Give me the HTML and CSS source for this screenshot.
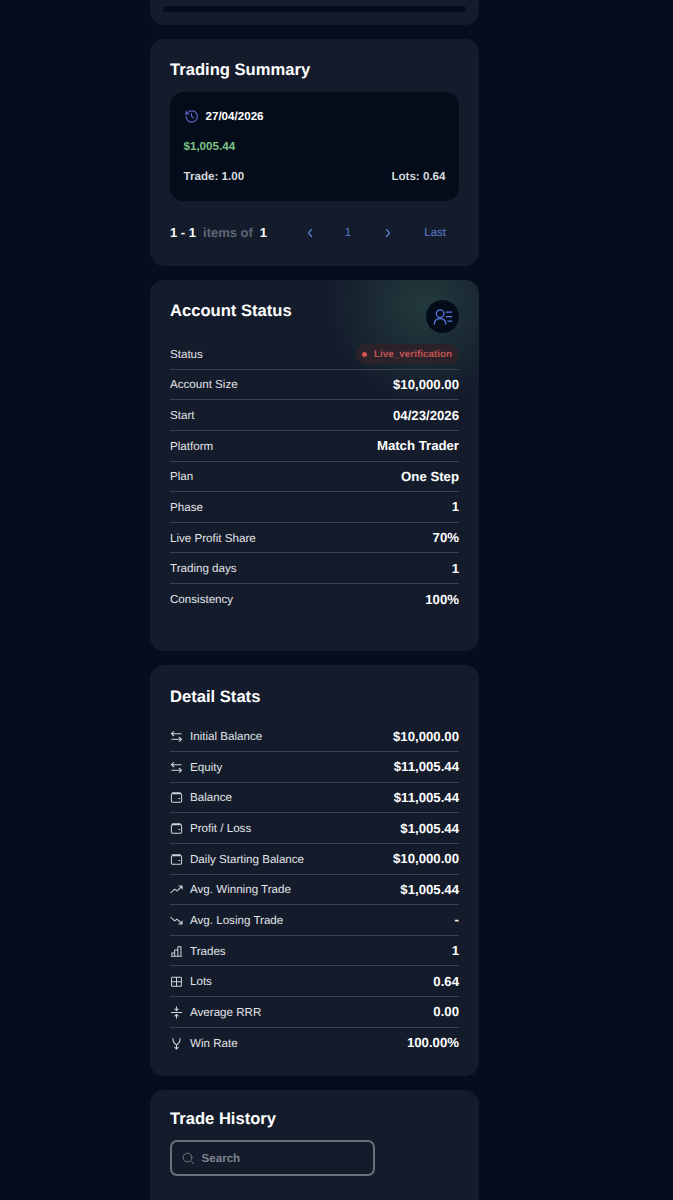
FILE: index.html
```html
<!DOCTYPE html>
<html>

<head>
    <meta charset="utf-8">
    <title>Dashboard</title>
    <meta name="viewport" content="width=device-width, initial-scale=1">
    <link rel="stylesheet" href="styles.css">
</head>

<body>
    <main class="column">
        <section class="card card-top">
            <div class="top-bar"></div>
        </section>

        <section class="card card-summary">
            <h2 class="card-title">Trading Summary</h2>
            <div class="summary-box">
                <div class="summary-date">
                    <svg class="history-icon" viewBox="0 0 24 24" fill="none" stroke="currentColor" stroke-width="1.9" stroke-linecap="round" stroke-linejoin="round">
                        <path d="M3.500 12a9 9 0 1 0 2.800-6.500L3.500 8" />
                        <path d="M3.500 3.500V8H8" />
                        <path d="M12 7.500V12l3.500 2" />
                    </svg>
                    <span>27/04/2026</span>
                </div>
                <div class="summary-profit">$1,005.44</div>
                <div class="summary-foot">
                    <span>Trade: 1.00</span>
                    <span>Lots: 0.64</span>
                </div>
            </div>
            <div class="pager">
                <div class="pager-count"><b>1 - 1</b><span>items of</span><b>1</b></div>
                <div class="pager-links">
                    <svg class="pager-arrow" viewBox="0 0 10 12" fill="none" stroke="currentColor" stroke-width="1.2" stroke-linecap="round" stroke-linejoin="round"><path d="M6.500 2.500 3.500 6l3 3.500" /></svg>
                    <span class="pager-page">1</span>
                    <svg class="pager-arrow" viewBox="0 0 10 12" fill="none" stroke="currentColor" stroke-width="1.2" stroke-linecap="round" stroke-linejoin="round"><path d="M3.500 2.500 6.500 6l-3 3.500" /></svg>
                    <span class="pager-last">Last</span>
                </div>
            </div>
        </section>

        <section class="card card-status">
            <div class="status-glow"></div>
            <div class="status-head">
                <h2 class="card-title">Account Status</h2>
                <div class="status-badge">
                    <svg viewBox="0 0 24 24" fill="none" stroke="currentColor" stroke-width="1.5" stroke-linecap="round" stroke-linejoin="round">
                        <circle cx="8.500" cy="8" r="4.500" />
                        <path d="M1.500 20.500c.4-4.300 3.200-6.500 7-6.500s6.600 2.200 7 6.500" />
                        <path d="M15.500 6h7M16 11.500h6.500M18 17h4.500" />
                    </svg>
                </div>
            </div>
            <div class="row">
                <span class="row-label">Status</span>
                <span class="pill"><i class="pill-dot"></i>Live_verification</span>
            </div>
            <div class="row"><span class="row-label">Account Size</span><span class="row-value">$10,000.00</span></div>
            <div class="row"><span class="row-label">Start</span><span class="row-value">04/23/2026</span></div>
            <div class="row"><span class="row-label">Platform</span><span class="row-value">Match Trader</span></div>
            <div class="row"><span class="row-label">Plan</span><span class="row-value">One Step</span></div>
            <div class="row"><span class="row-label">Phase</span><span class="row-value">1</span></div>
            <div class="row"><span class="row-label">Live Profit Share</span><span class="row-value">70%</span></div>
            <div class="row"><span class="row-label">Trading days</span><span class="row-value">1</span></div>
            <div class="row row-last"><span class="row-label">Consistency</span><span class="row-value">100%</span></div>
        </section>

        <section class="card card-detail">
            <h2 class="card-title">Detail Stats</h2>
            <div class="detail-rows">
                <div class="row">
                    <span class="row-label">
                        <svg class="row-icon" viewBox="0 0 14 14"><path d="M1.500 4h10.500M4 1.800 1.500 4 4 6.200M12.500 10H2M10 7.800l2.500 2.200-2.500 2.200" /></svg>
                        Initial Balance
                    </span>
                    <span class="row-value">$10,000.00</span>
                </div>
                <div class="row">
                    <span class="row-label">
                        <svg class="row-icon" viewBox="0 0 14 14"><path d="M1.500 4h10.500M4 1.800 1.500 4 4 6.200M12.500 10H2M10 7.800l2.500 2.200-2.500 2.200" /></svg>
                        Equity
                    </span>
                    <span class="row-value">$11,005.44</span>
                </div>
                <div class="row">
                    <span class="row-label">
                        <svg class="row-icon" viewBox="0 0 14 14"><path d="M2.500 2h8.500M1.500 4a1 1 0 0 1 1-1h9a1 1 0 0 1 1 1v7a1 1 0 0 1-1 1h-9a1 1 0 0 1-1-1zM9.500 8h1" /></svg>
                        Balance
                    </span>
                    <span class="row-value">$11,005.44</span>
                </div>
                <div class="row">
                    <span class="row-label">
                        <svg class="row-icon" viewBox="0 0 14 14"><path d="M2.500 2h8.500M1.500 4a1 1 0 0 1 1-1h9a1 1 0 0 1 1 1v7a1 1 0 0 1-1 1h-9a1 1 0 0 1-1-1zM9.500 8h1" /></svg>
                        Profit / Loss
                    </span>
                    <span class="row-value">$1,005.44</span>
                </div>
                <div class="row">
                    <span class="row-label">
                        <svg class="row-icon" viewBox="0 0 14 14"><path d="M2.500 2h8.500M1.500 4a1 1 0 0 1 1-1h9a1 1 0 0 1 1 1v7a1 1 0 0 1-1 1h-9a1 1 0 0 1-1-1zM9.500 8h1" /></svg>
                        Daily Starting Balance
                    </span>
                    <span class="row-value">$10,000.00</span>
                </div>
                <div class="row">
                    <span class="row-label">
                        <svg class="row-icon" viewBox="0 0 14 14"><path d="M.8 10.500 5 6.500l2.500 2 5.500-5M9.500 3.200H13v3.300" /></svg>
                        Avg. Winning Trade
                    </span>
                    <span class="row-value">$1,005.44</span>
                </div>
                <div class="row">
                    <span class="row-label">
                        <svg class="row-icon" viewBox="0 0 14 14"><path d="M.8 3.500 5 7.500l2.500-2 5.500 5M9.500 10.800H13V7.500" /></svg>
                        Avg. Losing Trade
                    </span>
                    <span class="row-value">-</span>
                </div>
                <div class="row">
                    <span class="row-label">
                        <svg class="row-icon" viewBox="0 0 14 14"><path d="M2 12.200V8.500h3v3.700M5 12.200V5.500h3.500v6.700M8.500 12.200V2h3.300v10.200M1.500 12.200h10.800" /></svg>
                        Trades
                    </span>
                    <span class="row-value">1</span>
                </div>
                <div class="row">
                    <span class="row-label">
                        <svg class="row-icon" viewBox="0 0 14 14"><path d="M2.500 2.500h9a.8.8 0 0 1 .8.8v7.900a.8.8 0 0 1-.8.8h-9a.8.8 0 0 1-.8-.8V3.300a.8.8 0 0 1 .8-.8zM7 2.500v9.500M1.700 7.200h10.600" /></svg>
                        Lots
                    </span>
                    <span class="row-value">0.64</span>
                </div>
                <div class="row">
                    <span class="row-label">
                        <svg class="row-icon" viewBox="0 0 14 14"><path d="M1.500 7h11M7 .8v4M5.200 3.200 7 5l1.800-1.800M7 13.200v-4M5.200 10.800 7 9l1.800 1.800" /></svg>
                        Average RRR
                    </span>
                    <span class="row-value">0.00</span>
                </div>
                <div class="row row-last">
                    <span class="row-label">
                        <svg class="row-icon" viewBox="0 0 14 14"><path d="M3 1.500C3.200 5.500 5 7.500 7 8.500c2-1 3.800-3 4-7M7 8.500v4.500M5 11l2 2 2-2" /></svg>
                        Win Rate
                    </span>
                    <span class="row-value">100.00%</span>
                </div>
            </div>
        </section>

        <section class="card card-history">
            <h2 class="card-title">Trade History</h2>
            <div class="search">
                <svg class="search-icon" viewBox="0 0 14 14" fill="none" stroke="currentColor" stroke-width="1" stroke-linecap="round"><circle cx="6.200" cy="6.200" r="4.900" /><path d="m9.800 9.800 3.200 3.200" /></svg>
                <span>Search</span>
            </div>
        </section>
    </main>
</body>

</html>
```

FILE: styles.css
```css
* {
    box-sizing: border-box;
}

body {
    margin: 0;
    height: 1200px;
    overflow: hidden;
    background-color: #040e1d;
    font-family: "Liberation Sans", sans-serif;
    text-rendering: geometricPrecision;
    color: #fff;
}

.column {
    display: flex;
    flex-direction: column;
    gap: 14px;
    width: 329px;
    margin-left: 150px;
}

.card {
    position: relative;
    overflow: hidden;
    padding: 0 20px;
    border-radius: 14px;
    background-color: #141c2c;
}

.card-title {
    margin: 0;
    font-size: 16.600px;
    font-weight: 700;
    line-height: 22px;
}

/* card cut off by the top of the screen */
.card-top {
    height: 25px;
    padding: 6px 13px 0;
    border-radius: 0 0 14px 14px;
}

.top-bar {
    height: 6px;
    border-radius: 3px;
    background-color: #050d1c;
}

.card-summary {
    height: 227px;
    padding-top: 20px;
}

.summary-box {
    height: 109px;
    margin-top: 11px;
    padding: 16px 13.500px 0;
    border-radius: 14px;
    background-color: #040c1a;
}

.summary-date {
    display: flex;
    align-items: center;
    gap: 7px;
    font-size: 11.600px;
    font-weight: 700;
    line-height: 17px;
}

.history-icon {
    width: 15px;
    height: 15px;
    color: #5866c0;
}

.summary-profit {
    margin-top: 14px;
    font-size: 11.600px;
    font-weight: 700;
    line-height: 16px;
    color: #7cc084;
}

.summary-foot {
    display: flex;
    justify-content: space-between;
    margin-top: 14px;
    font-size: 11.600px;
    font-weight: 700;
    line-height: 16px;
    color: #d5d8dd;
}

.pager {
    display: flex;
    align-items: center;
    justify-content: space-between;
    margin-top: 24px;
    font-size: 13px;
    line-height: 16px;
}

.pager-count {
    display: flex;
    gap: 7px;
    font-weight: 700;
}

.pager-count span {
    color: #5f6674;
}

.pager-links {
    display: flex;
    align-items: center;
    color: #5f7cd0;
    font-size: 11.500px;
}

.pager-arrow {
    width: 10px;
    height: 12px;
}

.pager-page {
    margin: 0 32px 0 30px;
}

.pager-last {
    margin-left: 31px;
    margin-right: 13px;
}

.card-status {
    height: 371.400px;
    padding-top: 20px;
}

.status-glow {
    position: absolute;
    top: -70px;
    right: -40px;
    width: 190px;
    height: 190px;
    background: radial-gradient(closest-side, rgba(62, 112, 88, 0.36), rgba(62, 112, 88, 0));
}

.status-head {
    position: relative;
    display: flex;
    justify-content: space-between;
    height: 39px;
}

.status-badge {
    display: flex;
    flex: none;
    align-items: center;
    justify-content: center;
    width: 33px;
    height: 33px;
    border-radius: 50%;
    background-color: #040c1a;
    color: #5a78e0;
}

.status-badge svg {
    width: 20px;
    height: 20px;
}

.row {
    position: relative;
    display: flex;
    align-items: center;
    justify-content: space-between;
    height: 30.640px;
    border-bottom: 1px solid #3b424f;
}

.row-last {
    border-bottom: 0;
}

.row-label {
    display: flex;
    align-items: center;
    gap: 7px;
    padding-top: 1px;
    font-size: 11.600px;
    color: #e2e4e8;
}

.row-value {
    font-size: 13.200px;
    font-weight: 700;
}

.row-icon {
    width: 13px;
    height: 13px;
    fill: none;
    stroke: #d0d3d8;
    stroke-width: 1.100;
    stroke-linecap: round;
    stroke-linejoin: round;
}

.pill {
    display: flex;
    align-items: center;
    gap: 7.500px;
    height: 20px;
    margin-top: 1px;
    padding: 0 7px 0 5.500px;
    border-radius: 10px;
    background-color: #2c2229;
    font-size: 9.900px;
    font-weight: 700;
    color: #c05452;
}

.pill-dot {
    width: 5px;
    height: 5px;
    border-radius: 50%;
    background-color: #d05552;
}

.card-detail {
    height: 411px;
    padding-top: 20.500px;
}

.detail-rows {
    margin-top: 13.500px;
}

.card-history {
    height: 130px;
    padding-top: 17.500px;
}

.search {
    display: flex;
    align-items: center;
    gap: 7px;
    width: 205px;
    height: 35.500px;
    margin-top: 10.500px;
    padding: 0 10px;
    border: 2px solid #6b7079;
    border-radius: 7px;
    font-size: 11.600px;
    font-weight: 700;
    color: #7d828c;
}

.search-icon {
    width: 12.500px;
    height: 12.500px;
}
```
